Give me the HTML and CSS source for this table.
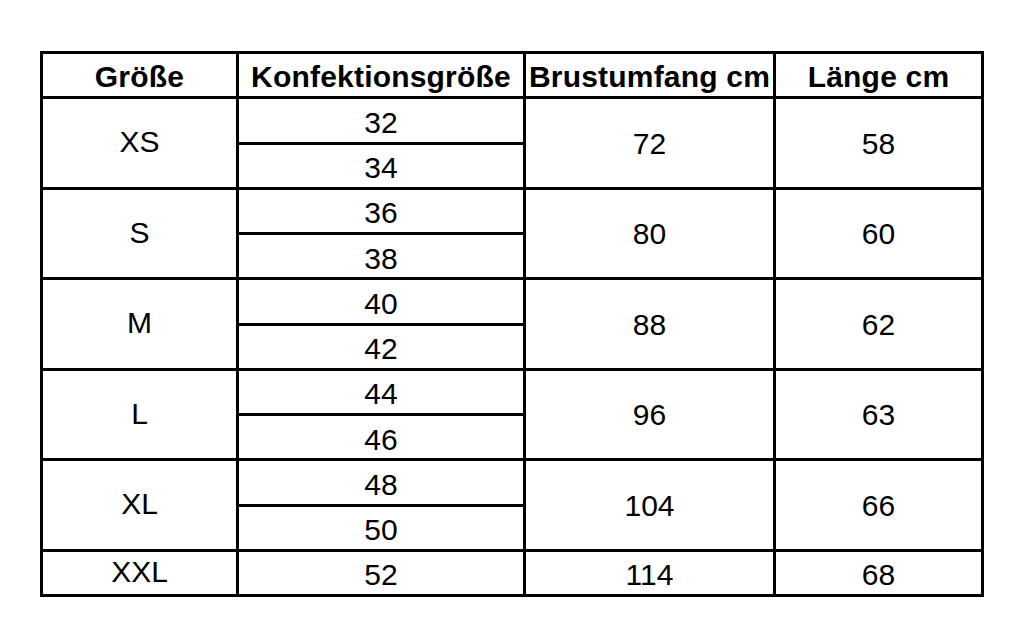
FILE: index.html
```html
<!DOCTYPE html>
<html lang="de">
<head>
<meta charset="utf-8">
<title>Größentabelle</title>
<link rel="stylesheet" href="styles.css">
</head>
<body>
<main class="page">
  <div class="chart">
    <div class="cell head">Größe</div>
    <div class="cell head">Konfektionsgröße</div>
    <div class="cell head">Brustumfang cm</div>
    <div class="cell head">Länge cm</div>

    <div class="cell size span2">XS</div>
    <div class="cell sub">32</div>
    <div class="cell big span2">72</div>
    <div class="cell big span2">58</div>
    <div class="cell sub">34</div>

    <div class="cell size span2">S</div>
    <div class="cell sub">36</div>
    <div class="cell big span2">80</div>
    <div class="cell big span2">60</div>
    <div class="cell sub">38</div>

    <div class="cell size span2">M</div>
    <div class="cell sub">40</div>
    <div class="cell big span2">88</div>
    <div class="cell big span2">62</div>
    <div class="cell sub">42</div>

    <div class="cell size span2">L</div>
    <div class="cell sub">44</div>
    <div class="cell big span2">96</div>
    <div class="cell big span2">63</div>
    <div class="cell sub">46</div>

    <div class="cell size span2">XL</div>
    <div class="cell sub">48</div>
    <div class="cell big span2">104</div>
    <div class="cell big span2">66</div>
    <div class="cell sub">50</div>

    <div class="cell size">XXL</div>
    <div class="cell sub">52</div>
    <div class="cell sub">114</div>
    <div class="cell sub">68</div>
  </div>
</main>
</body>
</html>
```
FILE: styles.css
```css
html, body {
  margin: 0;
  padding: 0;
  background: #ffffff;
}

.page {
  padding: 51px 0 0 40px;
}

.chart {
  display: grid;
  width: 944px;
  box-sizing: border-box;
  grid-template-columns: 193px 284px 247px 205px;
  grid-template-rows: repeat(12, 42.25px);
  gap: 3px;
  padding: 3px;
  background: #000000;
  font-family: "Liberation Sans", Arial, sans-serif;
  color: #000000;
}

.cell {
  background: #ffffff;
  display: flex;
  align-items: center;
  justify-content: center;
  font-size: 30px;
  line-height: 1;
  white-space: nowrap;
}

.head {
  font-weight: 700;
  font-size: 30px;
  padding-top: 4px;
  letter-spacing: 0.2px;
}

.span2 {
  grid-row: span 2;
}

.sub {
  padding-top: 5px;
}

.size {
  padding-bottom: 2px;
}

.big {
  padding-top: 1px;
}
```
